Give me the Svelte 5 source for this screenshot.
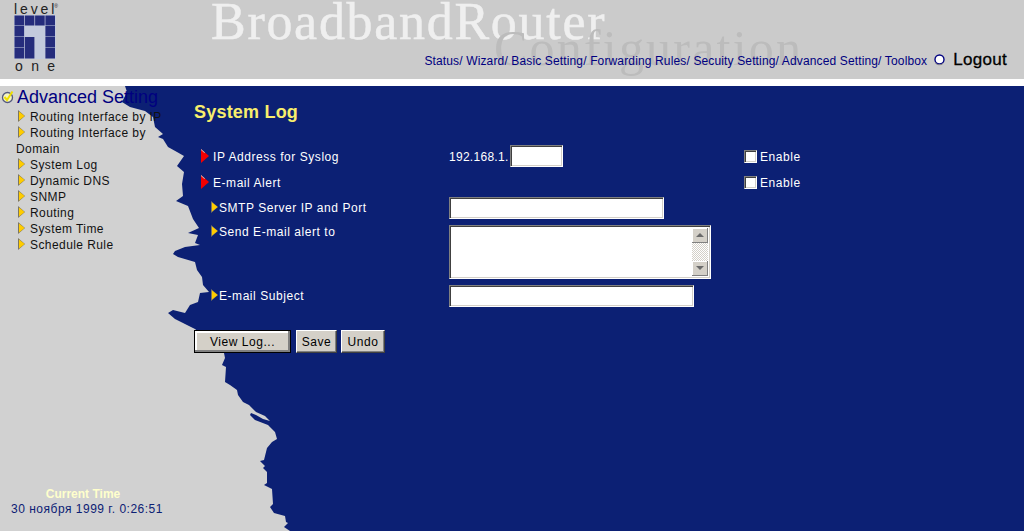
<script>
  const navLinks = ["Status", "Wizard", "Basic Setting", "Forwarding Rules", "Secuity Setting", "Advanced Setting", "Toolbox"];
  const menu = ["Routing Interface by IP", "Routing Interface by Domain", "System Log", "Dynamic DNS", "SNMP", "Routing", "System Time", "Schedule Rule"];

  // gray torn paper edge, traced from the top of the blue area down to the page bottom
  const edge = "0,86 125,86 127,92 122,102 130,107 145,111 153,117 155,127 163,134 158,137 163,139 168,147 177,152 184,156 177,166 184,172 182,184 183,196 176,201 188,206 193,219 199,228 188,233 198,235 195,243 200,245 185,247 175,251 173,254 178,257 195,262 197,270 202,277 203,285 209,292 200,293 198,302 190,305 185,313 173,310 168,313 175,319 183,323 195,329 224,353 225,358 222,365 226,367 225,382 230,385 237,390 238,395 243,402 249,405 256,412 265,416 270,421 263,419 256,415 251,413 250,415 255,420 268,425 275,432 277,439 272,442 267,448 264,460 260,461 265,466 263,468 267,472 267,483 264,485 272,489 273,504 270,507 274,513 285,516 286,522 288,523 284,527 290,531 0,531";
</script>

{#snippet arrow()}
  <svg class="arrow" width="7" height="12" viewBox="0 0 7 12">
    <path d="M0 0 L7 6 L0 12 Z" fill="#7c7660" />
    <path d="M1 1.4 L6.6 6 L1 10.6 Z" fill="#ffcc00" />
  </svg>
{/snippet}

{#snippet redArrow()}
  <svg class="red-arrow" width="8" height="14" viewBox="0 0 8 14">
    <path d="M0 0 L8 7 L0 14 Z" fill="#f40000" />
    <path d="M0 0 L4 3.5 L3.4 3.9 L0 0.9 Z" fill="#c8c8c8" />
  </svg>
{/snippet}

<div class="page">
  <header class="banner">
    <div class="logo">
      <div class="logo-top">level<sup>®</sup></div>
      <svg width="42" height="44" viewBox="0 0 42 44">
        <rect width="42" height="44" fill="#c3cadd" />
        {#each [0, 1, 2, 3] as c}
          <rect x={c * 10.3 + 0.5} y="0.5" width="9.6" height="10" fill="#252c7c" />
        {/each}
        <rect x="0.5" y="11" width="9.6" height="10.5" fill="#252c7c" />
        <rect x="0.5" y="22" width="9.6" height="10.5" fill="#252c7c" />
        <rect x="0.5" y="33" width="9.6" height="10.5" fill="#252c7c" />
        <rect x="10.8" y="22" width="9.6" height="21.5" fill="#252c7c" />
        <rect x="31.4" y="11" width="9.6" height="10.5" fill="#252c7c" />
        <rect x="31.4" y="22" width="9.6" height="10.5" fill="#252c7c" />
        <rect x="31.4" y="33" width="9.6" height="10.5" fill="#252c7c" />
      </svg>
      <div class="logo-bottom">one</div>
    </div>
    <div class="art-title">BroadbandRouter</div>
    <div class="art-sub">Configuration</div>
    <nav class="nav">
      <span class="links">
        {#each navLinks as link, i}{link}{i < navLinks.length - 1 ? "/ " : ""}{/each}
      </span>
      <svg class="ring" width="13" height="13" viewBox="0 0 13 13">
        <circle cx="6.5" cy="6.5" r="4.5" fill="#fff" stroke="#000080" stroke-width="1.4" />
        <path d="M2 9.5 A5.5 5.5 0 0 0 10 10.5" fill="none" stroke="#888" />
      </svg>
      <span class="logout">Logout</span>
    </nav>
  </header>

  <main class="main">
    <svg class="paper" width="320" height="445" viewBox="0 86 320 445">
      <polygon points={edge} fill="#d1d1d1" />
    </svg>

    <aside class="side">
      <div class="side-title">
        <svg class="check" width="13" height="14" viewBox="0 0 13 14">
          <circle cx="6.5" cy="7.5" r="5" fill="#f4f4c0" stroke="#555a80" stroke-width="1.3" />
          <path d="M3.5 7 L6 10 L11.5 1.5" fill="none" stroke="#f0e000" stroke-width="2" />
        </svg>
        <span>Advanced Setting</span>
      </div>
      <ul class="menu">
        {#each menu as item}
          <li>{@render arrow()}{item}</li>
        {/each}
      </ul>
      <div class="clock">
        <div class="clock-label">Current Time</div>
        <div class="clock-value">30 ноября 1999 г. 0:26:51</div>
      </div>
    </aside>

    <section class="content">
      <h1>System Log</h1>
      <div class="form">
        <div class="label lead">{@render redArrow()}IP Address for Syslog</div>
        <div class="ip">192.168.1.<input class="field ip-field" type="text" /></div>
        <label class="enable"><input type="checkbox" />Enable</label>

        <div class="label lead">{@render redArrow()}E-mail Alert</div>
        <div></div>
        <label class="enable"><input type="checkbox" />Enable</label>

        <div class="label sub">{@render arrow()}SMTP Server IP and Port</div>
        <div><input class="field smtp" type="text" /></div>
        <div></div>

        <div class="label sub top">{@render arrow()}Send E-mail alert to</div>
        <div class="textarea field">
          <textarea></textarea>
          <div class="scroll">
            <div class="scroll-btn"><span class="up"></span></div>
            <div class="scroll-track"></div>
            <div class="scroll-btn"><span class="down"></span></div>
          </div>
        </div>
        <div></div>

        <div class="label sub">{@render arrow()}E-mail Subject</div>
        <div><input class="field subject" type="text" /></div>
        <div></div>
      </div>
      <div class="actions">
        <button type="button" class="default">View Log...</button>
        <button type="button" class="save">Save</button>
        <button type="button" class="undo">Undo</button>
      </div>
    </section>
  </main>
</div>

<style>
  :global(body) {
    background: #fff;
    overflow: hidden;
  }

  .page {
    display: flex;
    flex-direction: column;
    height: 531px;
    font-family: "Liberation Sans", Arial, sans-serif;
    font-size: 12px;
  }

  .banner {
    position: relative;
    display: flex;
    justify-content: space-between;
    align-items: flex-end;
    height: 79px;
    margin-bottom: 7px;
    background: #cbcbcb;
    overflow: hidden;
  }

  .logo {
    display: flex;
    flex-direction: column;
    width: 44px;
    margin-left: 14px;
    padding-bottom: 7px;
    color: #222;
  }

  .logo-top {
    height: 12px;
    font-size: 14px;
    line-height: 12px;
    letter-spacing: 2.9px;
    white-space: nowrap;
  }

  .logo-top sup {
    font-size: 5px;
    line-height: 0;
    letter-spacing: 0;
    margin-left: -3px;
  }

  .logo-bottom {
    font-size: 14px;
    line-height: 11px;
    letter-spacing: 8.4px;
    margin-top: 2px;
    padding-left: 1px;
    white-space: nowrap;
  }

  .art-title,
  .art-sub {
    position: absolute;
    font-family: "Liberation Serif", serif;
    white-space: nowrap;
    filter: blur(0.4px);
  }

  .art-title {
    left: 211px;
    top: 0;
    font-size: 52px;
    line-height: 44px;
    letter-spacing: 1.7px;
    color: #efefef;
    -webkit-text-stroke: 0.5px #efefef;
  }

  .art-sub {
    left: 494px;
    top: 20px;
    font-size: 50px;
    line-height: 56px;
    letter-spacing: 2.2px;
    color: #bcbcbc;
  }

  .nav {
    position: relative;
    display: flex;
    align-items: center;
    margin-right: 17px;
    margin-bottom: 8px;
    color: #000080;
  }

  .links {
    white-space: pre;
    letter-spacing: 0.14px;
  }

  .ring {
    margin: 0 7px 2px 6px;
  }

  .logout {
    font-size: 17px;
    color: #000;
    letter-spacing: 0.3px;
    -webkit-text-stroke: 0.3px #000;
    margin-bottom: 1px;
  }

  .main {
    position: relative;
    display: flex;
    flex: 1;
    background: #0c2074;
  }

  .paper {
    position: absolute;
    left: 0;
    top: 0;
  }

  .side {
    position: relative;
    display: flex;
    flex-direction: column;
    width: 174px;
    flex-shrink: 0;
  }

  .side-title {
    display: flex;
    align-items: center;
    height: 22px;
    padding-left: 1px;
    font-size: 18px;
    color: #000080;
    white-space: nowrap;
  }

  .check {
    margin-right: 3px;
  }

  .menu {
    list-style: none;
    width: 150px;
    margin: 1px 0 0;
    padding: 0 0 0 16px;
    font-size: 12px;
    line-height: 16px;
    letter-spacing: 0.42px;
    color: #111;
    white-space: normal;
  }

  .menu :global(.arrow) {
    margin: 0 5px 0 2px;
    vertical-align: -1px;
  }

  .clock {
    margin-top: auto;
    margin-bottom: 14px;
    text-align: center;
    line-height: 15px;
  }

  .clock-label {
    font-weight: 700;
    color: #ffffcc;
    padding-right: 8px;
    margin-top: 1px;
  }

  .clock-value {
    color: #0c2074;
    white-space: nowrap;
    letter-spacing: 0.5px;
  }

  .content {
    position: relative;
    flex: 1;
    padding: 15px 0 0 20px;
    color: #fff;
    letter-spacing: 0.55px;
  }

  h1 {
    height: 24px;
    margin: 0 0 20px;
    font-size: 18px;
    line-height: 22px;
    letter-spacing: 0.2px;
    color: #f8ee6c;
  }

  .form {
    display: grid;
    grid-template-columns: 248px 295px 1fr;
    grid-template-rows: 26px 26px 28px 60px 22px;
    padding-left: 7px;
  }

  .label {
    line-height: 24px;
    white-space: nowrap;
  }

  .red-arrow {
    margin-right: 4px;
    vertical-align: -2px;
  }

  .sub {
    padding-left: 10px;
    line-height: 22px;
  }

  .sub.top {
    line-height: 14px;
  }

  .sub :global(.arrow) {
    margin-right: 1px;
    vertical-align: -1px;
  }

  .ip {
    display: flex;
    align-items: flex-start;
    line-height: 24px;
    letter-spacing: 0.28px;
  }

  .field {
    box-sizing: border-box;
    display: block;
    height: 22px;
    margin: 0;
    padding: 0;
    background: #fff;
    border: 1px solid;
    border-color: #808080 #fff #fff #808080;
    box-shadow:
      inset 1px 1px 0 #404040,
      inset -1px -1px 0 #d4d0c8;
    border-radius: 0;
    outline: none;
  }

  .ip-field {
    width: 53px;
    margin-left: 1px;
  }

  .smtp {
    width: 215px;
  }

  .subject {
    width: 245px;
  }

  .textarea {
    display: flex;
    width: 262px;
    height: 54px;
    padding: 2px;
  }

  textarea {
    flex: 1;
    min-width: 0;
    margin: 0;
    padding: 0;
    border: 0;
    resize: none;
    outline: none;
    overflow: hidden;
    background: #fff;
  }

  .scroll {
    display: flex;
    flex-direction: column;
    width: 16px;
  }

  .scroll-btn {
    display: flex;
    align-items: center;
    justify-content: center;
    height: 15px;
    background: #d4d0c8;
    border-bottom: 1px solid #808080;
    border-right: 1px solid #808080;
    box-sizing: border-box;
    box-shadow: inset 1px 1px 0 #fff;
  }

  .scroll-track {
    flex: 1;
    background: repeating-conic-gradient(#d4d0c8 0 25%, #fff 0 50%) 0 0 / 2px 2px;
  }

  .up,
  .down {
    width: 0;
    height: 0;
    border-left: 4px solid transparent;
    border-right: 4px solid transparent;
  }

  .up {
    border-bottom: 4px solid #6a6a6a;
  }

  .down {
    border-top: 4px solid #6a6a6a;
  }

  .enable {
    display: flex;
    align-items: center;
    height: 24px;
  }

  .enable input {
    appearance: none;
    box-sizing: border-box;
    width: 13px;
    height: 13px;
    margin: 0 3px 2px 0;
    background: #fff;
    border: 1px solid;
    border-color: #808080 #fff #fff #808080;
    box-shadow:
      inset 1px 1px 0 #404040,
      inset -1px -1px 0 #d4d0c8;
  }

  .actions {
    display: flex;
    align-items: flex-start;
    margin-top: 23px;
  }

  button {
    box-sizing: border-box;
    height: 23px;
    padding: 0;
    font-family: inherit;
    font-size: 12px;
    letter-spacing: 0.55px;
    color: #000;
    background: #d4d0c8;
    border: 1px solid;
    border-color: #fff #404040 #404040 #fff;
    box-shadow: inset -1px -1px 0 #808080;
    border-radius: 0;
  }

  .default {
    width: 97px;
    margin-right: 5px;
    outline: 1px solid #000;
    outline-offset: -1px;
    box-shadow:
      inset -2px -2px 0 #808080,
      inset 2px 2px 0 #fff;
  }

  .save {
    width: 41px;
    margin-right: 4px;
  }

  .undo {
    width: 44px;
  }
</style>
